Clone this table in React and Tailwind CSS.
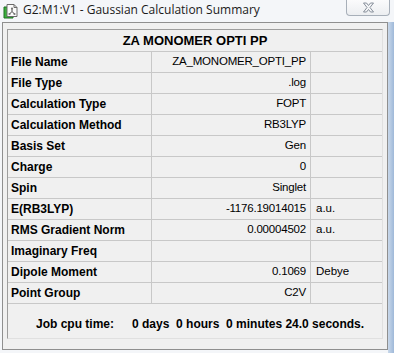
const rows = [
  ["File Name", "ZA_MONOMER_OPTI_PP", ""],
  ["File Type", ".log", ""],
  ["Calculation Type", "FOPT", ""],
  ["Calculation Method", "RB3LYP", ""],
  ["Basis Set", "Gen", ""],
  ["Charge", "0", ""],
  ["Spin", "Singlet", ""],
  ["E(RB3LYP)", "-1176.19014015", "a.u."],
  ["RMS Gradient Norm", "0.00004502", "a.u."],
  ["Imaginary Freq", "", ""],
  ["Dipole Moment", "0.1069", "Debye"],
  ["Point Group", "C2V", ""],
];

function AppIcon() {
  return (
    <svg width="16" height="16" viewBox="0 0 16 16" className="shrink-0">
      <path d="M1 4 L1 15 L10 15 L10 4 Z" fill="#38b03a" stroke="#1e6e22" />
      <path d="M4 1.5 L11 1.5 L14 4.5 L14 13.5 L4 13.5 Z" fill="#fbfbfb" stroke="#6a6a6a" />
      <path d="M11 1.5 L11 4.5 L14 4.5" fill="none" stroke="#6a6a6a" />
      <line x1="9" y1="5.5" x2="9" y2="8.5" stroke="#444" />
      <line x1="9" y1="8.5" x2="6.5" y2="11" stroke="#444" />
      <line x1="9" y1="8.5" x2="11.5" y2="11" stroke="#444" />
      <circle cx="9" cy="5.5" r="1.1" fill="#777" />
      <circle cx="6.5" cy="11" r="1.1" fill="#777" />
      <circle cx="11.5" cy="11" r="1.1" fill="#777" />
    </svg>
  );
}

function CloseButton() {
  return (
    <div className="flex h-[16px] w-[44px] items-center justify-center rounded-b-[4px] border border-t-0 border-[#a7afb9] bg-gradient-to-b from-[#fbfbfc] to-[#eceef1]">
      <svg width="13" height="11" viewBox="0 0 13 11">
        <path
          d="M1.5 1 L4.5 1 L6.5 3.5 L8.5 1 L11.5 1 L8 5.5 L11.5 10 L8.5 10 L6.5 7.5 L4.5 10 L1.5 10 L5 5.5 Z"
          fill="#f4f5f7"
          stroke="#7c8591"
          strokeWidth="0.9"
          strokeLinejoin="round"
        />
      </svg>
    </div>
  );
}

export default function App() {
  return (
    <div className="flex h-[353px] w-[394px] flex-col overflow-hidden bg-[#f4f6f9] font-['Liberation_Sans',Arial,sans-serif] text-black">
      {/* title bar */}
      <div className="flex h-[22px] items-start">
        <div className="ml-[3px] mt-[3px]">
          <AppIcon />
        </div>
        <span className="ml-[4px] mt-[2px] font-['Open_Sans','Noto_Sans',sans-serif] text-[12px] leading-[16px] text-[#1a1a1a]">
          G2:M1:V1 - Gaussian Calculation Summary
        </span>
        <div className="ml-auto mr-[4px]">
          <CloseButton />
        </div>
      </div>

      <div className="flex flex-1">
        {/* dialog body */}
        <div className="mb-[3px] ml-[2px] flex flex-1 flex-col border border-[#8f8f8f] bg-[#f0f0f0] px-[4px] pb-[10px] pt-[6px]">
          <div className="flex flex-col border border-[#9d9d9d] border-b-[#e0e0e0] border-r-[#e0e0e0]">
            <div className="flex h-[22px] items-center justify-center border-b border-[#c8c8c8] text-[13px] font-bold">
              ZA MONOMER OPTI PP
            </div>
            {rows.map(([label, value, unit]) => (
              <div key={label} className="flex h-[21px] border-b border-[#c8c8c8] text-[12px]">
                <div className="flex w-[144px] items-center border-r border-[#c8c8c8] pl-[3px] font-bold">
                  {label}
                </div>
                <div className="flex w-[159px] items-center justify-end border-r border-[#c8c8c8] pr-[4px] text-[11.5px] tracking-[-0.2px]">
                  {value}
                </div>
                <div className="flex flex-1 items-center pl-[5px] text-[11.5px]">{unit}</div>
              </div>
            ))}
            <div className="flex h-[34px] items-center whitespace-pre pl-[28px] pt-[5px] text-[12px] font-bold">
              <span>Job cpu time:</span>
              <span className="ml-[18px]">0 days  0 hours  0 minutes 24.0 seconds.</span>
            </div>
          </div>
        </div>
        {/* right frame edge */}
        <div className="w-[6px] bg-gradient-to-r from-[#c9d8ea] to-[#9fb9d9]" />
      </div>
    </div>
  );
}
